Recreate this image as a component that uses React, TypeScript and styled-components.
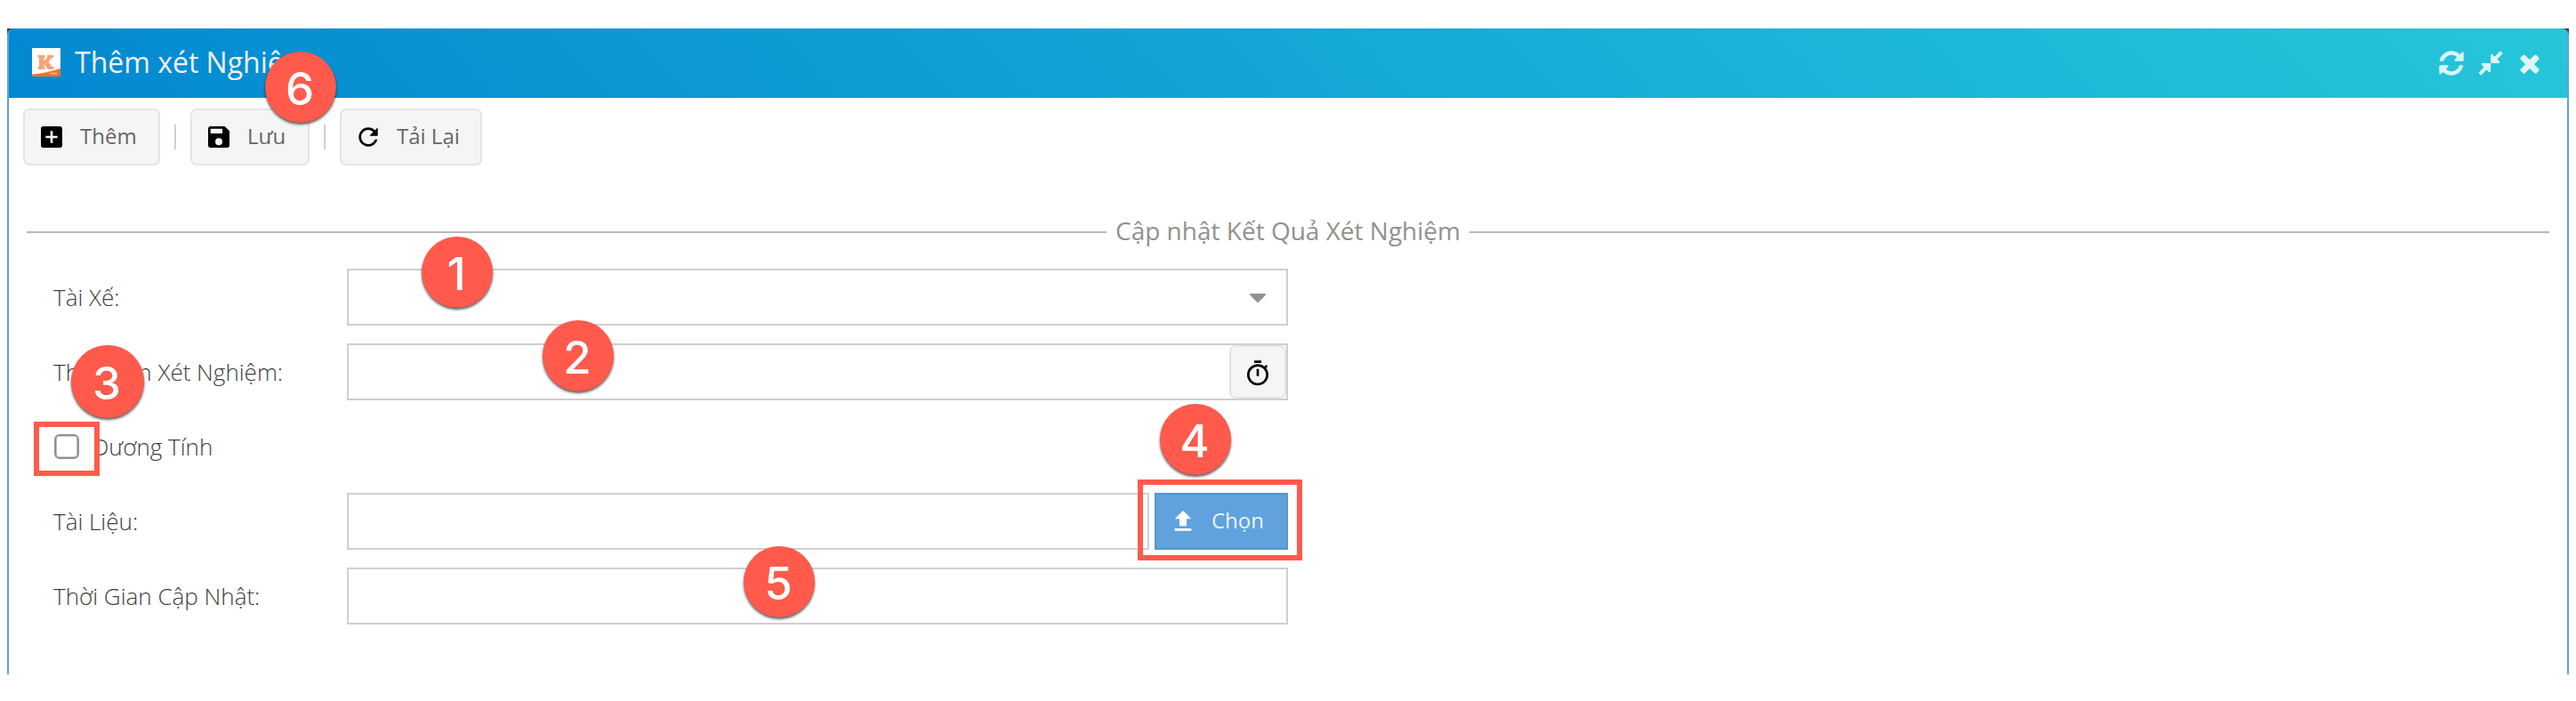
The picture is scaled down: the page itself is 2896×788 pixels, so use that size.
import React from 'react';
import styled, { createGlobalStyle } from 'styled-components';

const GlobalStyle = createGlobalStyle`
  * { box-sizing: border-box; }
  body {
    margin: 0;
    background: #fff;
    font-family: 'Open Sans', 'Noto Sans', sans-serif;
  }
`;

const Page = styled.div`
  position: relative;
  width: 2896px;
  height: 788px;
  padding: 32px 8px 30px;
  overflow: hidden;
`;

const Window = styled.section`
  height: 726px;
  display: flex;
  flex-direction: column;
  background: linear-gradient(#33454f, #33454f) top / 100% 10px no-repeat;
`;

const Header = styled.header`
  height: 78px;
  flex: none;
  display: flex;
  align-items: center;
  padding: 0 26px 2px;
  border: solid #5fa2dd;
  border-width: 0 2px;
  border-radius: 8px 8px 0 0;
  background: linear-gradient(45deg, #0288d1 0%, #26c6da 100%);
`;

const Title = styled.h1`
  flex: 1;
  margin: 0 0 0 16px;
  font-size: 32px;
  line-height: 44px;
  font-weight: 400;
  color: #f0f0f0;
  white-space: nowrap;
`;

const Tools = styled.div`
  display: flex;
  gap: 12px;
  padding-top: 1px;
  color: rgba(255, 255, 255, 0.84);
`;

const Content = styled.div`
  flex: 1;
  padding: 12px 20px 0 16px;
  border: solid #5fa2dd;
  border-width: 0 2px;
  background: #fff;
`;

const Toolbar = styled.div`
  display: flex;
  align-items: center;
  height: 64px;
`;

const ToolButton = styled.button<{ $width: number }>`
  width: ${(p) => p.$width}px;
  height: 64px;
  display: flex;
  align-items: center;
  gap: 16px;
  padding: 0 0 0 14px;
  border: 2px solid #e4e4e4;
  border-radius: 7px;
  background: #f5f5f5;
  color: #000;
  font-family: inherit;
`;

const ButtonText = styled.span<{ $color?: string }>`
  padding-bottom: 2px;
  font-size: 24px;
  line-height: 32px;
  font-weight: 400;
  color: ${(p) => p.$color ?? '#666'};
  white-space: nowrap;
`;

const Separator = styled.span`
  width: 2px;
  height: 28px;
  margin: 0 16px;
  background: #cfcfcf;
`;

const Legend = styled.div`
  display: flex;
  align-items: center;
  gap: 10px;
  height: 38px;
  margin: 56px 0 0 4px;
  font-size: 28px;
  line-height: 38px;
  color: #919191;
  white-space: nowrap;

  span {
    padding-bottom: 4px;
  }

  &::before,
  &::after {
    content: '';
    flex: 1;
    height: 2px;
    background: #b9b9b9;
  }
`;

const Form = styled.div`
  display: flex;
  flex-direction: column;
  gap: 20px;
  width: 1388px;
  margin: 22px 0 0 34px;
`;

const Row = styled.div`
  display: flex;
  align-items: center;
  height: 64px;
`;

const Label = styled.label`
  width: 330px;
  flex: none;
  font-size: 26px;
  line-height: 36px;
  font-weight: 300;
  color: #404040;
  white-space: nowrap;
`;

const Field = styled.div`
  flex: 1;
  height: 64px;
  display: flex;
  align-items: center;
  justify-content: flex-end;
  border: 2px solid #cfcfcf;
  background: #fff;
`;

const Trigger = styled.span`
  width: 64px;
  display: flex;
  justify-content: center;
  padding-top: 2px;
  color: #919191;
`;

const TimeButton = styled.button`
  width: 64px;
  height: 60px;
  display: flex;
  align-items: center;
  justify-content: center;
  padding: 4px 0 0;
  border: 2px solid #e4e4e4;
  border-radius: 7px;
  background: #f5f5f5;
  color: #000;
`;

const ChooseButton = styled.button`
  width: 150px;
  height: 64px;
  margin-left: 6px;
  display: flex;
  align-items: center;
  gap: 16px;
  padding: 0 0 0 14px;
  border: 2px solid #5795cb;
  background: #5fa2dd;
  color: #fff;
  font-family: inherit;
`;

const Checkbox = styled.span`
  width: 28px;
  height: 28px;
  margin: 0 15px 0 1px;
  border: 2px solid #919191;
  border-radius: 6px;
  box-shadow: inset 0 0 0 0.6px #919191;
`;

const Badge = styled.div<{ $x: number; $y: number; $size?: number }>`
  position: absolute;
  left: ${(p) => p.$x}px;
  top: ${(p) => p.$y}px;
  width: ${(p) => p.$size ?? 80}px;
  height: ${(p) => p.$size ?? 80}px;
  display: flex;
  align-items: center;
  justify-content: center;
  padding: 3px 2px 0 0;
  border-radius: 50%;
  background: #ff5a4c;
  box-shadow: 0 2px 3px rgba(0, 0, 0, 0.65);
  color: #fff;
  font: 500 51px/60px Inter, 'Liberation Sans', sans-serif;
`;

const Highlight = styled.div<{ $x: number; $y: number; $w: number; $h: number }>`
  position: absolute;
  left: ${(p) => p.$x}px;
  top: ${(p) => p.$y}px;
  width: ${(p) => p.$w}px;
  height: ${(p) => p.$h}px;
  border: 6px solid #ff5a4c;
`;

const Glyph = styled.svg`
  display: block;
  flex: none;
  width: 32px;
  height: 32px;
  fill: currentColor;
`;

const icons = {
  plus: 'M17,13H13V17H11V13H7V11H11V7H13V11H17M19,3H5C3.89,3 3,3.89 3,5V19A2,2 0 0,0 5,21H19A2,2 0 0,0 21,19V5C21,3.89 20.1,3 19,3Z',
  save: 'M15,9H5V5H15M12,19A3,3 0 0,1 9,16A3,3 0 0,1 12,13A3,3 0 0,1 15,16A3,3 0 0,1 12,19M17,3H5C3.89,3 3,3.9 3,5V19A2,2 0 0,0 5,21H19A2,2 0 0,0 21,19V7L17,3Z',
  reload:
    'M17.65,6.35C16.2,4.9 14.21,4 12,4A8,8 0 0,0 4,12A8,8 0 0,0 12,20C15.73,20 18.84,17.45 19.73,14H17.65C16.83,16.33 14.61,18 12,18A6,6 0 0,1 6,12A6,6 0 0,1 12,6C13.66,6 15.14,6.69 16.22,7.78L13,11H20V4L17.65,6.35Z',
  timer:
    'M12,20A7,7 0 0,1 5,13A7,7 0 0,1 12,6A7,7 0 0,1 19,13A7,7 0 0,1 12,20M19.03,7.39L20.45,5.97C20,5.46 19.55,5 19.04,4.56L17.62,6C16.07,4.74 14.12,4 12,4A9,9 0 0,0 3,13A9,9 0 0,0 12,22C17,22 21,17.97 21,13C21,10.88 20.26,8.93 19.03,7.39M11,14H13V8H11M15,1H9V3H15V1Z',
  upload: 'M9,16V10H5L12,3L19,10H15V16H9M5,20V18H19V20H5Z',
};

const toolIcons = {
  refresh:
    'M1639 1056q0 5-1 7-64 268-268 434.5t-478 166.5q-146 0-282.5-55t-243.5-157l-129 129q-19 19-45 19t-45-19-19-45v-448q0-26 19-45t45-19h448q26 0 45 19t19 45-19 45l-137 137q71 66 161 102t187 36q134 0 250-65t186-179q11-17 53-117 8-23 30-23h192q13 0 22.5 9.5t9.5 22.5zm25-800v448q0 26-19 45t-45 19h-448q-26 0-45-19t-19-45 19-45l138-138q-148-137-349-137-134 0-250 65t-186 179q-11 17-53 117-8 23-30 23h-199q-13 0-22.5-9.5t-9.5-22.5v-7q65-268 270-434.5t480-166.5q146 0 284 55.5t245 156.5l130-129q19-19 45-19t45 19 19 45z',
  compress:
    'M896 960v448q0 26-19 45t-45 19-45-19l-144-144-332 332q-10 10-23 10t-23-10l-114-114q-10-10-10-23t10-23l332-332-144-144q-19-19-19-45t19-45 45-19h448q26 0 45 19t19 45zm755-672q0 13-10 23l-332 332 144 144q19 19 19 45t-19 45-45 19h-448q-26 0-45-19t-19-45v-448q0-26 19-45t45-19 45 19l144 144 332-332q10-10 23-10t23 10l114 114q10 10 10 23z',
  close:
    'M1490 1322q0 40-28 68l-136 136q-28 28-68 28t-68-28l-294-294-294 294q-28 28-68 28t-68-28l-136-136q-28-28-28-68t28-68l294-294-294-294q-28-28-28-68t28-68l136-136q28-28 68-28t68 28l294 294 294-294q28-28 68-28t68 28l136 136q28 28 28 68t-28 68l-294 294 294 294q28 28 28 68z',
};

const Icon = ({ name }: { name: keyof typeof icons }) => (
  <Glyph viewBox="0 0 24 24">
    <path d={icons[name]} />
  </Glyph>
);

const ToolIcon = ({ name }: { name: keyof typeof toolIcons }) => (
  <Glyph viewBox="0 0 1792 1792">
    <path d={toolIcons[name]} />
  </Glyph>
);

const Logo = () => (
  <Glyph viewBox="0 0 32 32">
    <rect width="32" height="32" fill="#fff" />
    <path d="M0 32V29.5Q14 28.5 32 23V32Z" fill="#f0752f" />
    <path
      d="M6.5 8H14.5V11H13.5V14.5L17 11V8H24V11H22.5L18.5 15.5L22.5 21H24.5V24H18L13.5 18V21H14.5V24H6.5V21H8V11H6.5Z"
      fill="#f7a577"
    />
    <path d="M20.5 28.5H28" stroke="#f9b48c" strokeWidth="1.5" />
  </Glyph>
);

const badges = [
  { n: 1, x: 474, y: 266 },
  { n: 2, x: 610, y: 360 },
  { n: 3, x: 80, y: 388, size: 82 },
  { n: 4, x: 1304, y: 454 },
  { n: 5, x: 836, y: 614 },
  { n: 6, x: 298, y: 58 },
];

export default function App() {
  return (
    <Page>
      <GlobalStyle />
      <Window>
        <Header>
          <Logo />
          <Title>Thêm xét Nghiệm</Title>
          <Tools>
            <ToolIcon name="refresh" />
            <ToolIcon name="compress" />
            <ToolIcon name="close" />
          </Tools>
        </Header>
        <Content>
          <Toolbar>
            <ToolButton $width={154}>
              <Icon name="plus" />
              <ButtonText>Thêm</ButtonText>
            </ToolButton>
            <Separator />
            <ToolButton $width={134}>
              <Icon name="save" />
              <ButtonText>Lưu</ButtonText>
            </ToolButton>
            <Separator />
            <ToolButton $width={160}>
              <Icon name="reload" />
              <ButtonText>Tải Lại</ButtonText>
            </ToolButton>
          </Toolbar>
          <Legend>
            <span>Cập nhật Kết Quả Xét Nghiệm</span>
          </Legend>
          <Form>
            <Row>
              <Label>Tài Xế:</Label>
              <Field>
                <Trigger>
                  <svg width="18" height="10" viewBox="0 0 18 10" fill="currentColor">
                    <path d="M1 0H17Q18 0 18 1.5L10 9.5Q9 10.4 8 9.5L0 1.5Q0 0 1 0Z" />
                  </svg>
                </Trigger>
              </Field>
            </Row>
            <Row>
              <Label>Thời Gian Xét Nghiệm:</Label>
              <Field>
                <TimeButton>
                  <Icon name="timer" />
                </TimeButton>
              </Field>
            </Row>
            <Row>
              <Checkbox />
              <Label>Dương Tính</Label>
            </Row>
            <Row>
              <Label>Tài Liệu:</Label>
              <Field />
              <ChooseButton>
                <Icon name="upload" />
                <ButtonText $color="#f0f0f0">Chọn</ButtonText>
              </ChooseButton>
            </Row>
            <Row>
              <Label>Thời Gian Cập Nhật:</Label>
              <Field />
            </Row>
          </Form>
        </Content>
      </Window>
      <Highlight $x={38} $y={474} $w={74} $h={61} />
      <Highlight $x={1279} $y={539} $w={185} $h={91} />
      {badges.map((b) => (
        <Badge key={b.n} $x={b.x} $y={b.y} $size={b.size}>
          {b.n}
        </Badge>
      ))}
    </Page>
  );
}
